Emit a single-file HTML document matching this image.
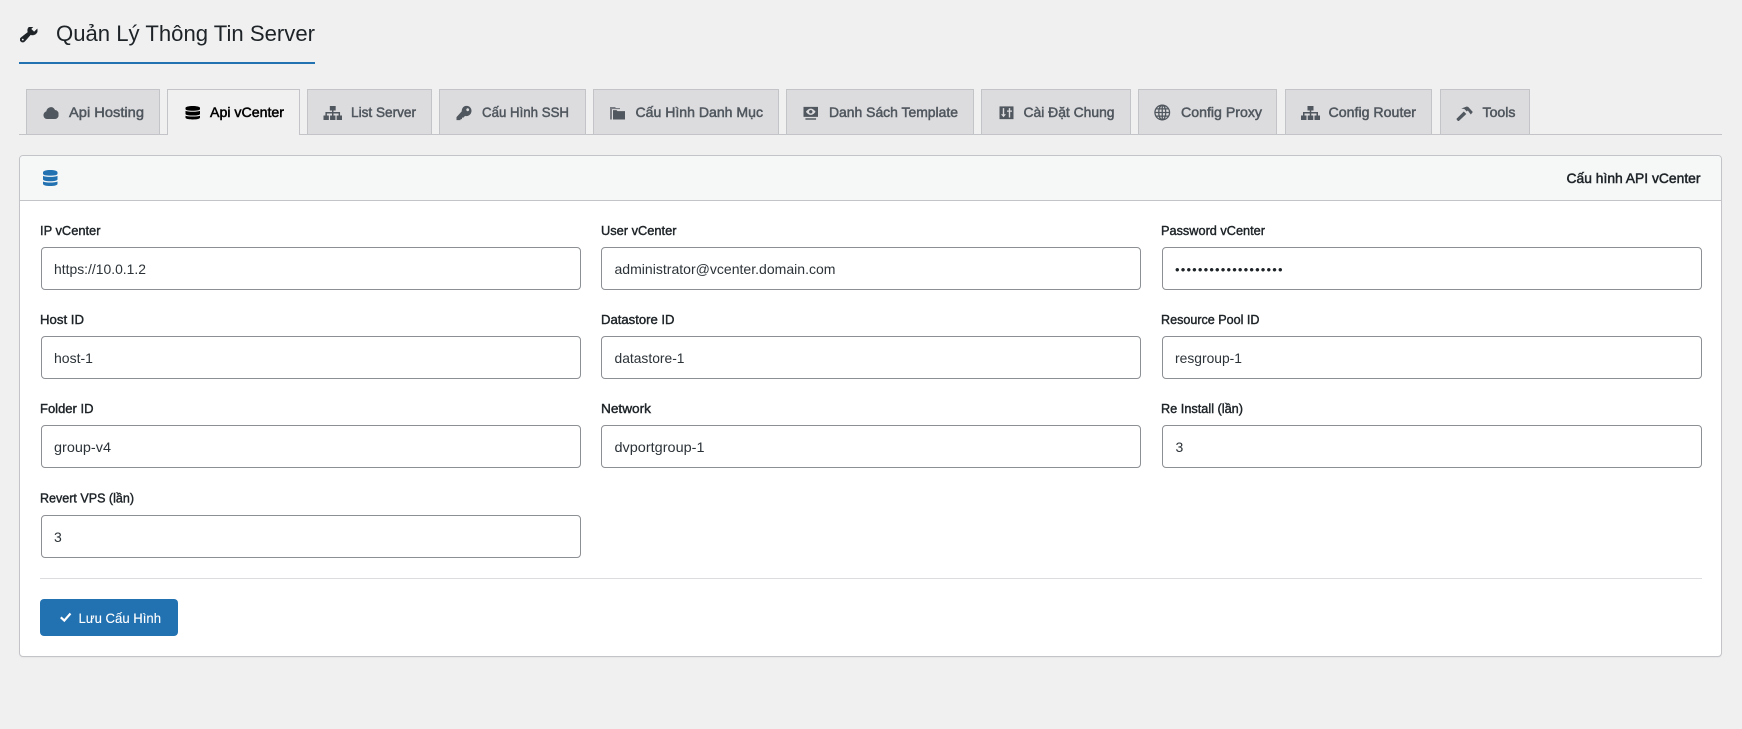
<!DOCTYPE html>
<html lang="vi">
<head>
<meta charset="utf-8">
<title>Quản Lý Thông Tin Server</title>
<style>
html,body{margin:0;padding:0;width:1742px;height:729px;overflow:hidden;background:#f0f0f1}
body{position:relative;font-family:"Liberation Sans",sans-serif}
.a{position:absolute;box-sizing:border-box}
.u{left:19px;top:62px;width:296px;height:2px;background:#2271b1}
.line{left:19px;top:134px;width:1703px;height:1px;background:#c3c4c7}
.tab{top:89px;height:46px;background:#dcdcde;border:1px solid #c3c4c7;border-bottom:1px solid #c3c4c7}
.tab.on{background:#f0f0f1;border-bottom:0;height:46px}
.card{left:19px;top:155px;width:1703px;height:502px;background:#fff;border:1px solid #c3c4c7;border-radius:4px;box-shadow:0 1px 1px rgba(0,0,0,.04);overflow:hidden}
.head{left:0;top:0;width:100%;height:45px;background:#f6f7f7;border-bottom:1px solid #c3c4c7}
.in{width:540px;height:43px;background:#fff;border:1px solid #8c8f94;border-radius:4px}
.hr{left:40px;top:578px;width:1662px;height:1px;background:#dcdcde}
.btn{left:40px;top:599px;width:138px;height:37px;background:#2271b1;border-radius:4px}
svg.o{position:absolute;left:0;top:0}
.t{font-size:14px;fill:#50575e;stroke:#50575e;stroke-width:.5px}
.l{font-size:13px;fill:#1d2327;stroke:#1d2327;stroke-width:.42px}
.v{font-size:14px;fill:#2c3338}
.i{fill:#50575e}
</style>
</head>
<body>
<div class="a u"></div>
<div class="a tab" style="left:26px;width:134px"></div>
<div class="a tab" style="left:307px;width:125px"></div>
<div class="a tab" style="left:439px;width:147px"></div>
<div class="a tab" style="left:593px;width:186px"></div>
<div class="a tab" style="left:786px;width:188px"></div>
<div class="a tab" style="left:981px;width:150px"></div>
<div class="a tab" style="left:1138px;width:139px"></div>
<div class="a tab" style="left:1285px;width:147px"></div>
<div class="a tab" style="left:1440px;width:90px"></div>
<div class="a line"></div>
<div class="a tab on" style="left:167px;width:133px"></div>
<div class="a card"><div class="a head"></div></div>
<div class="a in" style="left:40.5px;top:247px"></div>
<div class="a in" style="left:601px;top:247px"></div>
<div class="a in" style="left:1161.500px;top:247px"></div>
<div class="a in" style="left:40.5px;top:336px"></div>
<div class="a in" style="left:601px;top:336px"></div>
<div class="a in" style="left:1161.500px;top:336px"></div>
<div class="a in" style="left:40.5px;top:425px"></div>
<div class="a in" style="left:601px;top:425px"></div>
<div class="a in" style="left:1161.500px;top:425px"></div>
<div class="a in" style="left:40.5px;top:515px"></div>
<div class="a hr"></div>
<div class="a btn"></div>

<svg class="o" width="1742" height="729" viewBox="0 0 1742 729" xmlns="http://www.w3.org/2000/svg" font-family="'Liberation Sans',sans-serif">
<defs>
<symbol id="db" viewBox="3 1 14 17" preserveAspectRatio="none">
<path d="M3 3.500C3 2 6 1 10 1s7 1 7 2.500V5C17 6.500 14 7 10 7S3 6.500 3 5z"/>
<path d="M3 7.200C4.500 8 7 8.300 10 8.300s5.500-.3 7-1.100V11c0 1.300-3 2-7 2s-7-.7-7-2z"/>
<path d="M3 13.200c1.500.8 4 1.100 7 1.100s5.500-.3 7-1.100v2.500c0 1.500-3 2.300-7 2.300s-7-.8-7-2.300z"/>
</symbol>
<symbol id="net" viewBox="0 0 19 14" preserveAspectRatio="none">
<path d="M6.500 0h6v4.500h-2.250V6H17v3.500h2V14h-5.500V9.500h2V7.500h-5.250v2h2V14h-5.500V9.500h2v-2H3.500v2h2V14H0V9.500h2V6h6.750V4.500H6.500z"/>
</symbol>
</defs>

<!-- title -->
<svg x="20" y="27" width="17.500" height="16" viewBox="2 3.300 16 15.500" preserveAspectRatio="none"><path fill="#1d2327" stroke="#1d2327" stroke-width=".4" fill-rule="evenodd" d="M16.680 9.770c-1.340 1.340-3.300 1.670-4.950.99l-5.410 6.520c-.99.99-2.590.99-3.580 0s-.99-2.590 0-3.570l6.520-5.420c-.68-1.650-.35-3.610.99-4.950 1.280-1.280 3.120-1.620 4.720-1.060l-2.890 2.890 2.820 2.820 2.860-2.870c.53 1.580.18 3.390-1.080 4.670zM3.810 16.210c.4.39 1.040.39 1.430 0 .4-.4.4-1.040 0-1.430-.39-.4-1.030-.4-1.430 0-.39.39-.39 1.030 0 1.430z"/></svg>
<text x="56" y="41" font-size="22.500" fill="#1d2327" textLength="259" lengthAdjust="spacingAndGlyphs">Quản Lý Thông Tin Server</text>

<!-- tab icons -->
<svg x="43" y="107" width="15.500" height="12" viewBox="0 1 16 11" preserveAspectRatio="none"><path class="i" d="M4 12a3.500 3.500 0 0 1-.6-6.950 4.800 4.800 0 0 1 9-1.300A4 4 0 0 1 12 12z"/></svg>
<use href="#db" x="185.500" y="106" width="14.500" height="13.500" fill="#000"/>
<use href="#net" x="323.500" y="106" width="18.500" height="14" fill="#50575e"/>
<svg x="456.500" y="105.700" width="15" height="14.500" viewBox="0 0 15 14" preserveAspectRatio="none"><path class="i" fill-rule="evenodd" d="M10 0a5 5 0 1 1-1.500 9.770L7 11.500H5.500V13H4v1H0v-3L5.230 5.500A5 5 0 0 1 10 0zM11.200 2.500a1.400 1.400 0 1 0 .001 0z"/></svg>
<svg x="610" y="107" width="15" height="12.500" viewBox="0 0 15 12" preserveAspectRatio="none"><path fill="#787c82" d="M0 0h5l1 1h4v1H2v10H0z"/><path class="i" d="M3 3h3.500l1 1H15v8H3z"/></svg>
<svg x="803.500" y="106.700" width="14.500" height="13.500" viewBox="0 0 15 14" preserveAspectRatio="none"><path class="i" fill-rule="evenodd" d="M0 0h15v10.500H0zM2.500 5.200C4 3 6 2 7.500 2s3.500 1 5 3.200C11 7.500 9 8.500 7.500 8.500S4 7.500 2.500 5.200zM7.500 3.400a1.800 1.800 0 1 0 .001 0z"/><rect class="i" x="2" y="12" width="11" height="1.500"/></svg>
<svg x="999.500" y="106.300" width="14" height="13" viewBox="0 0 14 14" preserveAspectRatio="none"><rect class="i" width="14" height="14"/><path fill="#dcdcde" d="M3.300 2h1.400v6.500h1.800L4 11.800 1.500 8.500h1.800zM9.300 2h1.400v2.500h1.800v1.400h-1.800V12H9.300V5.900H7.500V4.500h1.800z"/></svg>
<svg x="1154" y="104.500" width="16.500" height="16" viewBox="0 0 16 16" fill="none" stroke="#50575e" stroke-width="1.300"><circle cx="8" cy="8" r="7.300"/><ellipse cx="8" cy="8" rx="3.500" ry="7.300"/><path d="M8 .7v14.600M.7 8h14.600M1.800 4.400h12.400M1.800 11.600h12.400"/></svg>
<use href="#net" x="1301" y="106" width="19" height="14" fill="#50575e"/>
<svg x="1456.300" y="106" width="17" height="15" viewBox="0 0 17 15"><path class="i" d="M0 13L7.500 5.500 10 8 2 15.500zM5 2.500L10.500.5 12 1l4.500 5-2 2.500-3-4-1 1L8 3z"/></svg>

<!-- tab labels -->
<text class="t" x="69" y="117" textLength="75" lengthAdjust="spacingAndGlyphs">Api Hosting</text>
<text class="t" x="210" y="117" textLength="74" lengthAdjust="spacingAndGlyphs" style="fill:#000;stroke:#000">Api vCenter</text>
<text class="t" x="351" y="117" textLength="65" lengthAdjust="spacingAndGlyphs">List Server</text>
<text class="t" x="482" y="117" textLength="87" lengthAdjust="spacingAndGlyphs">Cấu Hình SSH</text>
<text class="t" x="635.500" y="117" textLength="127.500" lengthAdjust="spacingAndGlyphs">Cấu Hình Danh Mục</text>
<text class="t" x="829" y="117" textLength="129" lengthAdjust="spacingAndGlyphs">Danh Sách Template</text>
<text class="t" x="1023.500" y="117" textLength="91" lengthAdjust="spacingAndGlyphs">Cài Đặt Chung</text>
<text class="t" x="1181" y="117" textLength="81" lengthAdjust="spacingAndGlyphs">Config Proxy</text>
<text class="t" x="1328.500" y="117" textLength="87.500" lengthAdjust="spacingAndGlyphs">Config Router</text>
<text class="t" x="1482.500" y="117" textLength="33" lengthAdjust="spacingAndGlyphs">Tools</text>

<!-- card header -->
<use href="#db" x="43" y="170" width="14.500" height="16" fill="#2271b1"/>
<text x="1566.500" y="183" font-size="14" fill="#1d2327" stroke="#1d2327" stroke-width=".5" textLength="134" lengthAdjust="spacingAndGlyphs">Cấu hình API vCenter</text>

<!-- labels -->
<text class="l" x="40" y="235" textLength="60.500" lengthAdjust="spacingAndGlyphs">IP vCenter</text>
<text class="l" x="601" y="235" textLength="75.500" lengthAdjust="spacingAndGlyphs">User vCenter</text>
<text class="l" x="1161" y="235" textLength="104" lengthAdjust="spacingAndGlyphs">Password vCenter</text>
<text class="l" x="40" y="324" textLength="44" lengthAdjust="spacingAndGlyphs">Host ID</text>
<text class="l" x="601" y="324" textLength="73.500" lengthAdjust="spacingAndGlyphs">Datastore ID</text>
<text class="l" x="1161" y="324" textLength="98.500" lengthAdjust="spacingAndGlyphs">Resource Pool ID</text>
<text class="l" x="40" y="413" textLength="53.500" lengthAdjust="spacingAndGlyphs">Folder ID</text>
<text class="l" x="601" y="413" textLength="50" lengthAdjust="spacingAndGlyphs">Network</text>
<text class="l" x="1161" y="413" textLength="82" lengthAdjust="spacingAndGlyphs">Re Install (lần)</text>
<text class="l" x="40" y="502.500" textLength="94" lengthAdjust="spacingAndGlyphs">Revert VPS (lần)</text>

<!-- values -->
<text class="v" x="54" y="274" textLength="92" lengthAdjust="spacingAndGlyphs">https://10.0.1.2</text>
<text class="v" x="614.500" y="274" textLength="221" lengthAdjust="spacingAndGlyphs">administrator@vcenter.domain.com</text>
<text class="v" x="1175" y="273.800" textLength="107.500" lengthAdjust="spacing" style="font-size:13px;fill:#1d2327">•••••••••••••••••••</text>
<text class="v" x="54" y="363" textLength="39" lengthAdjust="spacingAndGlyphs">host-1</text>
<text class="v" x="614.500" y="363" textLength="70" lengthAdjust="spacingAndGlyphs">datastore-1</text>
<text class="v" x="1175" y="363" textLength="67" lengthAdjust="spacingAndGlyphs">resgroup-1</text>
<text class="v" x="54" y="452" textLength="57" lengthAdjust="spacingAndGlyphs">group-v4</text>
<text class="v" x="614.500" y="452" textLength="90" lengthAdjust="spacingAndGlyphs">dvportgroup-1</text>
<text class="v" x="1175.500" y="452">3</text>
<text class="v" x="54" y="542">3</text>

<!-- button -->
<path d="M60.800 617.300L64.300 620.600 70.500 613.500" fill="none" stroke="#fff" stroke-width="2.200"/>
<text x="78.500" y="623" font-size="14" fill="#fff" stroke="#fff" stroke-width=".12" textLength="82.500" lengthAdjust="spacingAndGlyphs">Lưu Cấu Hình</text>
</svg>
</body>
</html>
